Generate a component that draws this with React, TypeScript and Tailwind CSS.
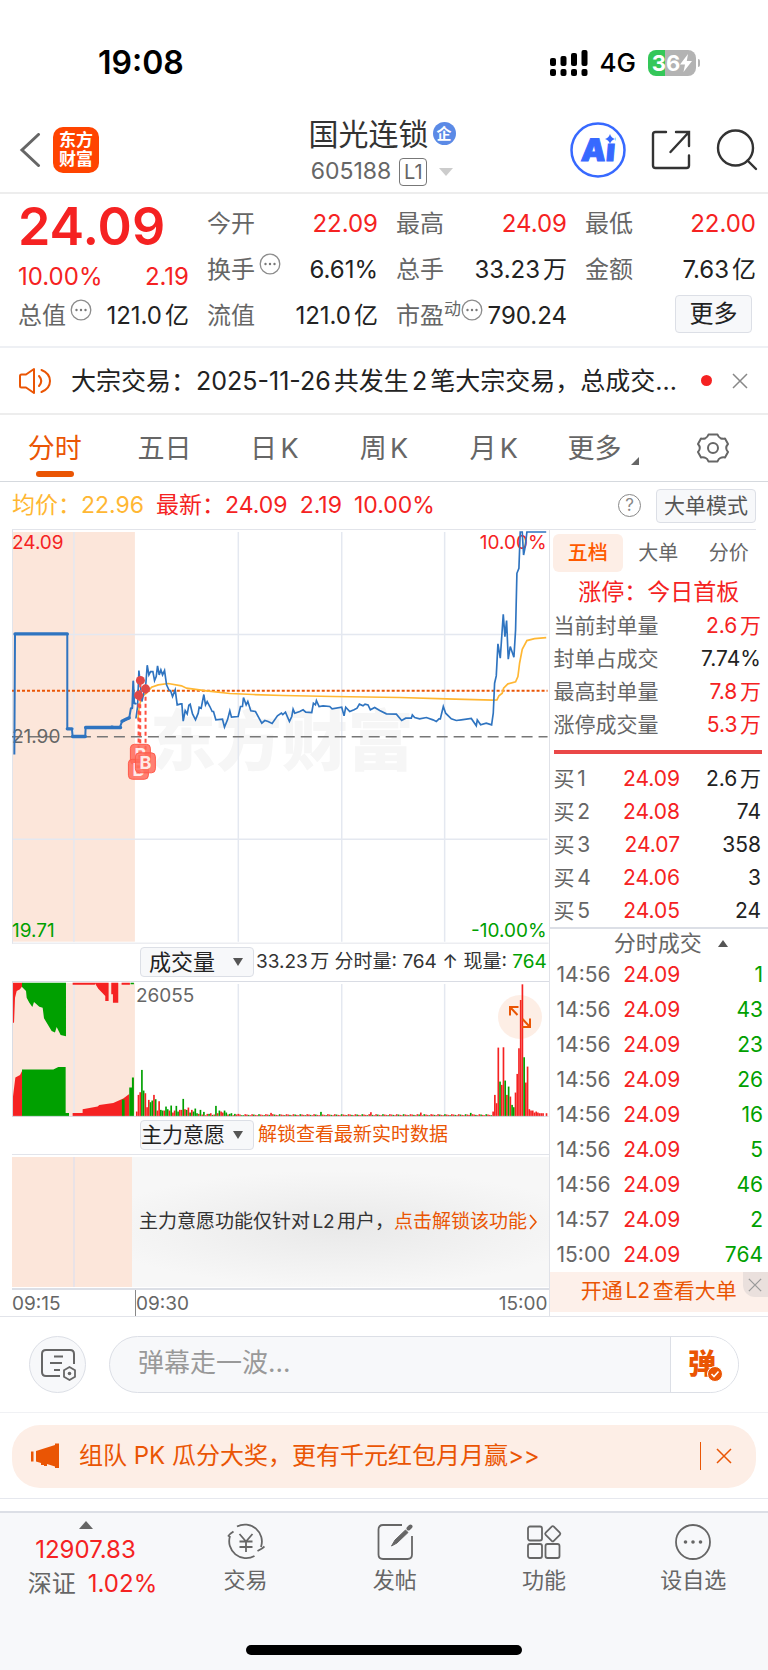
import React, { useState } from 'react';

interface Quote {
  label: string;
  value: string;
  up?: boolean;
  hint?: boolean;
  sup?: string;
}

const quoteColumns: Quote[][] = [
  [
    { label: '今开', value: '22.09', up: true },
    { label: '换手', value: '6.61%', hint: true },
    { label: '流值', value: '121.0亿' },
  ],
  [
    { label: '最高', value: '24.09', up: true },
    { label: '总手', value: '33.23万' },
    { label: '市盈', value: '790.24', hint: true, sup: '动' },
  ],
  [
    { label: '最低', value: '22.00', up: true },
    { label: '金额', value: '7.63亿' },
  ],
];

const periods = ['分时', '五日', '日K', '周K', '月K', '更多'];

const sealStats = [
  { label: '当前封单量', value: '2.6万', up: true },
  { label: '封单占成交', value: '7.74%', up: false },
  { label: '最高封单量', value: '7.8万', up: true },
  { label: '涨停成交量', value: '5.3万', up: true },
];

const bids = [
  ['买1', '24.09', '2.6万'],
  ['买2', '24.08', '74'],
  ['买3', '24.07', '358'],
  ['买4', '24.06', '3'],
  ['买5', '24.05', '24'],
];

const trades = [
  ['14:56', '24.09', '1'],
  ['14:56', '24.09', '43'],
  ['14:56', '24.09', '23'],
  ['14:56', '24.09', '26'],
  ['14:56', '24.09', '16'],
  ['14:56', '24.09', '5'],
  ['14:56', '24.09', '46'],
  ['14:57', '24.09', '2'],
  ['15:00', '24.09', '764'],
];

// Series are stored in thirds of a chart unit
const auctionLine =
  '43,704 45,342 202,342 202,626 216,628 218,650 256,650 257,623 330,623 336,620 344,622 360,622 366,606 376,600 388,594 393,565 397,565 398,540 400,485 403,550 410,552';

const priceLine =
  '408,596 413,560 417,452 422,500 426,545 436,500 438,490 442,436 447,465 452,455 459,455 464,482 469,470 473,438 478,465 483,450 488,465 494,452 500,495 508,512 512,512 518,530 526,510 532,555 543,552 546,552 550,604 556,572 562,582 567,556 571,553 578,582 587,600 595,580 598,562 604,565 612,524 617,555 622,545 630,560 637,575 641,575 648,600 668,598 674,622 683,600 690,573 695,592 715,590 722,560 728,560 731,533 739,555 744,545 753,573 767,575 786,610 795,602 805,605 817,611 833,588 845,580 849,584 857,577 869,605 876,590 880,568 885,580 900,575 910,570 918,577 936,578 941,550 947,555 950,542 958,560 970,558 990,560 997,567 1026,562 1033,588 1038,562 1050,575 1063,570 1072,565 1079,553 1090,558 1096,553 1105,555 1112,570 1125,563 1140,572 1160,582 1190,583 1206,602 1218,595 1235,595 1238,585 1245,593 1260,597 1280,593 1300,600 1310,605 1318,597 1322,597 1331,560 1338,580 1355,597 1370,602 1385,600 1415,596 1430,618 1433,600 1443,615 1460,610 1476,615 1481,580 1485,490 1490,468 1495,372 1502,415 1511,283 1516,350 1521,302 1526,418 1532,380 1543,412 1548,330 1552,160 1558,145 1562,36 1568,36 1572,105 1577,80 1582,36 1640,36';

const averageLine =
  '414,600 418,560 426,530 440,520 455,502 475,495 505,491 545,498 560,505 620,513 690,521 760,524 850,527 1000,530 1200,533 1340,537 1480,541 1492,540 1498,528 1508,520 1512,505 1525,492 1548,486 1555,470 1560,430 1568,388 1582,362 1605,356 1640,353';

// Bar heights per minute, negative is a falling minute
const openingBars = [
  15, 65, 73, -140, -78, 70, 28, 50, -43, -48, 65, -52, 18, 46, -20, -18, 18, -30, -22, 18, -33, 12, 18, -32,
  -15, 20, 20, -53, 22, -20, 27, -12, 20, -15, -24, -10, 8, -20, 6, -14, 4, 8, -8, 10, -5, 6, -32, 10, -18, 15,
  12, -18, -12, 6, -8, -10, 4, -8, 6, 8, 6, -4,
];
const middayBars = Array.from({ length: 145 }, (_, i) => {
  const spike = (i * 13) % 29 === 5 ? 7 : 0;
  return (4 + ((i * 7) % 4) + spike) * ((i * 5) % 3 === 0 ? -1 : 1);
});
const closingBars = [
  15, 65, 40, 207, -105, 95, 208, -108, 65, -90, 60, -35, -28, 72, 128, 205, 350, 397, -178, 102, 150, 22, 18, 18,
  12, 15, 12, 10, 10, 10, 0, 10,
];
const volumeBars = [...openingBars, ...middayBars, ...closingBars];

const latin = { fontFamily: 'Inter, "Noto Sans CJK SC", sans-serif' };

const HintIcon = () => (
  <svg viewBox="0 0 22 22" className="w-[22px] h-[22px] shrink-0 self-start mt-1.5" fill="none" aria-hidden="true">
    <circle cx="11" cy="11" r="9.8" stroke="#8c8c8c" strokeWidth="1.3" />
    <circle cx="6.5" cy="11" r="1.2" fill="#777" />
    <circle cx="11" cy="11" r="1.2" fill="#777" />
    <circle cx="15.5" cy="11" r="1.2" fill="#777" />
  </svg>
);

const CloseIcon = ({ className }: { className: string }) => (
  <svg viewBox="0 0 16 16" className={className} fill="none" stroke="currentColor" strokeWidth="1.5" aria-hidden="true">
    <path d="M1 1l14 14M15 1L1 15" />
  </svg>
);

const QuoteRow = ({ label, value, up, hint, sup }: Quote) => (
  <div className="flex h-[46px] items-center">
    <span className="text-[#666]">{label}</span>
    {sup && <span className="self-start text-[17px] leading-8 text-[#666]">{sup}</span>}
    {hint && (
      <span className={`flex h-full ${sup ? '' : 'ml-1'}`}>
        <HintIcon />
      </span>
    )}
    <span className={`ml-auto ${up ? 'text-[#f52222]' : 'text-[#222]'}`}>{value}</span>
  </div>
);

const StatusBar = () => (
  <div className="flex h-[108px] items-center justify-between pt-[18px] pr-[68px] pl-[98px] text-black">
    <span className="text-[32px] font-semibold">19:08</span>
    <div className="flex items-center gap-3">
      <svg viewBox="0 0 38 28" className="h-7 w-[38px]" aria-hidden="true">
        <rect x="0" y="9" width="6" height="8" rx="2" />
        <rect x="10.500" y="7" width="6" height="10" rx="2" />
        <rect x="21" y="4" width="6" height="13" rx="2" />
        <rect x="31.500" y="1" width="6" height="16" rx="2" />
        <rect x="0" y="20" width="6" height="7" rx="2" />
        <rect x="10.500" y="20" width="6" height="7" rx="2" />
        <rect x="21" y="20" width="6" height="7" rx="2" />
        <rect x="31.500" y="20" width="6" height="7" rx="2" />
      </svg>
      <span className="text-[26px] font-medium">4G</span>
      <div className="flex items-center">
        <div className="flex h-[26px] w-12 items-center justify-center rounded-lg bg-[linear-gradient(90deg,#34c759_36%,#b3b3b3_36%)] text-white">
          <span className="text-[22px] font-bold">36</span>
          <svg viewBox="0 0 12 18" className="h-[18px] w-3" fill="currentColor" aria-hidden="true">
            <path d="M8 0L0 10.500h5L3.500 18 12 7H6.800z" />
          </svg>
        </div>
        <span className="ml-0.5 h-2 w-0.5 rounded-r bg-[#b3b3b3]"></span>
      </div>
    </div>
  </div>
);

const Header = () => (
  <header className="grid h-[86px] grid-cols-[1fr_auto_1fr] items-center border-b-2 border-[#ededed] px-2.5">
    <div className="flex items-center gap-3 pl-[9px]">
      <button aria-label="返回">
        <svg viewBox="0 0 22 34" className="h-[34px] w-[22px]" fill="none" stroke="#666" strokeWidth="3" aria-hidden="true">
          <path d="M19.500 1.500L3 17l16.500 15.500" strokeLinecap="round" />
        </svg>
      </button>
      <a
        href="#home"
        className="flex h-[46px] w-[46px] flex-col items-center justify-center rounded-[10px] bg-[#ff4400] text-[17px] leading-[19px] font-bold text-white"
      >
        <span>东方</span>
        <span>财富</span>
      </a>
    </div>
    <div className="flex flex-col items-center pt-[7px] pr-1">
      <h1 className="flex items-center gap-1 text-[30px] leading-9 text-[#333]">
        国光连锁
        <span className="flex h-[23px] w-[23px] items-center justify-center rounded-full bg-[#5b8ae6] text-[15px] leading-none font-bold text-white">
          企
        </span>
      </h1>
      <div className="flex h-10 items-center text-[23px] text-[#666]">
        605188
        <span className="ml-2 flex h-7 w-7 items-center justify-center rounded border border-[#777] text-[20px]">L1</span>
        <svg viewBox="0 0 14 8" className="ml-3 h-2 w-3.5" aria-hidden="true">
          <path d="M0 0h14L7 8z" fill="#ccc" />
        </svg>
      </div>
    </div>
    <div className="flex items-center justify-end gap-[25px]">
      <button aria-label="AI 助手">
        <svg viewBox="0 0 56 56" className="h-14 w-14" aria-hidden="true">
          <circle cx="28" cy="28" r="26.500" fill="#fff" stroke="#3769ff" strokeWidth="2.500" />
          <text x="11" y="39" fontSize="31" fontWeight="900" fill="#3769ff" stroke="#3769ff" transform="skewX(-5) translate(3 0)">
            Ai
          </text>
          <path d="M33 10h12v11H33z" fill="#fff" />
          <path d="M40 12q1.200 3.800 5 5-3.800 1.200-5 5-1.200-3.800-5-5 3.800-1.200 5-5z" fill="#3769ff" />
        </svg>
      </button>
      <button aria-label="分享">
        <svg viewBox="0 0 40 40" className="h-10 w-10" fill="none" stroke="#333" strokeWidth="2.400" strokeLinecap="round" aria-hidden="true">
          <path d="M15 2H4.500Q2 2 2 4.500v31Q2 38 4.500 38h31q2.500 0 2.500-2.500V25.500M25 2h13v14M38 2L19.500 22" />
        </svg>
      </button>
      <button aria-label="搜索">
        <svg viewBox="0 0 42 42" className="h-[42px] w-[42px]" fill="none" stroke="#333" strokeWidth="2.400" strokeLinecap="round" aria-hidden="true">
          <circle cx="19.500" cy="19" r="17.500" />
          <path d="M31.500 31.500L40 40" />
        </svg>
      </button>
    </div>
  </header>
);

const QuotePanel = () => (
  <section className="grid grid-cols-4 gap-x-[18px] border-b-2 border-[#eef0f4] pt-[7px] pr-3 pb-[7px] pl-[18px] text-[24px] leading-8">
    <div className="flex flex-col text-[#f52222]">
      <strong className="h-[52px] text-[52px] leading-[52px] font-semibold">24.09</strong>
      <div className="flex h-12 items-center justify-between">
        <span>10.00%</span>
        <span>2.19</span>
      </div>
      <div className="-mt-2 flex h-[46px] items-center text-[#222]">
        <span className="text-[#666]">总值</span>
        <span className="ml-1 flex h-full">
          <HintIcon />
        </span>
        <span className="ml-auto">121.0亿</span>
      </div>
    </div>
    {quoteColumns.map((column, i) => (
      <div key={i} className="flex flex-col">
        {column.map((quote) => (
          <QuoteRow key={quote.label} {...quote} />
        ))}
        {i === 2 && (
          <button className="mt-0.5 mr-1 h-[38px] w-[77px] self-end rounded border border-[#dcdfe6] bg-[#f7f8fa] text-[24px] leading-none text-[#222]">
            更多
          </button>
        )}
      </div>
    ))}
  </section>
);

const Notice = () => (
  <div className="flex h-[67px] items-center border-b-2 border-[#ededed] pr-5 pl-[19px]">
    <svg viewBox="0 0 32 28" className="h-7 w-8 shrink-0" fill="none" stroke="#ea5504" strokeWidth="2" strokeLinejoin="round" strokeLinecap="round" aria-hidden="true">
      <path d="M15 2v24L7 20.500H2.500Q1 20.500 1 19V9q0-1.500 1.500-1.500H7zM20 9q4.500 5 0 10M22.500 3q8.500 3.500 8.500 11t-8.500 11" />
    </svg>
    <a href="#notice" className="ml-5 min-w-0 flex-1 truncate text-[25px] leading-8 text-[#222]">
      大宗交易：2025-11-26共发生2笔大宗交易，总成交...
    </a>
    <span className="h-[11px] w-[11px] rounded-full bg-[#f52222]"></span>
    <button aria-label="关闭公告" className="ml-5 text-[#888]">
      <CloseIcon className="h-4 w-4" />
    </button>
  </div>
);

interface PeriodTabsProps {
  active: string;
  onSelect: (period: string) => void;
}

const PeriodTabs: React.FC<PeriodTabsProps> = ({ active, onSelect }) => (
  <nav className="grid h-[67px] grid-cols-7 border-b border-[#d5d9de] text-[27px] text-[#666]">
    {periods.map((period) => (
      <button
        key={period}
        onClick={() => onSelect(period)}
        className={`flex flex-col items-center pt-3.5 ${period === active ? 'text-[#ea5504]' : ''}`}
      >
        <span className="flex items-end gap-2.5 leading-10">
          {period}
          {period === '更多' && (
            <svg viewBox="0 0 8 8" className="mb-1 h-2 w-2" aria-hidden="true">
              <path d="M8 0v8H0z" fill="#666" />
            </svg>
          )}
        </span>
        {period === active && <span className="mt-0.5 h-1.5 w-[38px] rounded-full bg-[#ea5504]"></span>}
      </button>
    ))}
    <button aria-label="设置" className="flex items-center justify-center">
      <svg viewBox="0 0 32 30" className="h-[30px] w-8" fill="none" stroke="#666" strokeWidth="2" strokeLinejoin="round" aria-hidden="true">
        <path d="M11.500 1.500h9q1 2.800 3 3.700 2 .8 4.500.3l3 5.500q-1.800 2-1.800 4t1.800 4l-3 5.500q-2.500-.5-4.500.4-2 .8-3 3.600h-9q-1-2.800-3-3.600-2-.9-4.500-.4L1 19q1.800-2 1.800-4T1 11l3-5.500q2.500.5 4.500-.3 2-.9 3-3.700z" />
        <circle cx="16" cy="15" r="5" />
      </svg>
    </button>
  </nav>
);

const PriceChart = () => (
  <svg viewBox="0 0 537 414" className="block h-auto w-full" role="img" aria-label="分时走势" style={latin}>
    <text x="138" y="235" fontSize="66" fontWeight="900" fill="#f6f6f6">
      东方财富
    </text>
    <rect x="0" y="2" width="123" height="410" fill="#fce6da" />
    <g stroke="#e4e8f0" fill="none">
      <path d="M62 2v410M226.500 2v410M330 2v410M433 2v410M0 104.500h536M0 309.500h536" strokeWidth="1.500" />
      <path d="M0.500 0v414M0 413.500h537" stroke="#e2e4ea" />
    </g>
    <path d="M0 207h536" stroke="#777" strokeWidth="1.500" strokeDasharray="11 6" />
    <path d="M0 161h536" stroke="#ea5504" strokeWidth="2" strokeDasharray="3 2" />
    <g fontSize="19">
      <text x="0" y="19" fill="#f52222">24.09</text>
      <text x="0" y="213" fill="#666">21.90</text>
      <text x="0" y="407" fill="#00a000">19.71</text>
      <text x="535" y="19" textAnchor="end" fill="#f52222">10.00%</text>
      <text x="535" y="407" textAnchor="end" fill="#00a000">-10.00%</text>
    </g>
    <g transform="translate(-12 -10) scale(0.33333)" fill="none">
      <polyline points={averageLine} stroke="#ffb733" strokeWidth="5" />
      <polyline points={auctionLine} stroke="#2f74c0" strokeWidth="6" strokeLinejoin="round" />
      <path d="M45 342h157M202 627h14M218 650h38M257 623h105M366 604l12-6 10-4" stroke="#2f74c0" strokeWidth="10" strokeLinecap="round" />
      <polyline points={priceLine} stroke="#2f74c0" strokeWidth="5" />
      <path d="M421 490v190M416 530v190M437 510v190" stroke="#ff5040" strokeWidth="6" strokeDasharray="12 9" />
    </g>
    <g fill="#e04848">
      <circle cx="128.500" cy="150.500" r="4.500" />
      <circle cx="133.700" cy="159" r="4.500" />
      <circle cx="126.700" cy="165.500" r="4.500" />
    </g>
    {[
      [128.5, 224.5],
      [126.5, 239.5],
      [133.5, 233],
    ].map(([x, y]) => (
      <g key={x} fillOpacity="0.85">
        <rect x={x - 10} y={y - 10} width="20" height="20" rx="4" fill="#ff6a5a" stroke="#ff5a4a" />
        <text x={x} y={y + 6.5} fontSize="18" fontWeight="700" textAnchor="middle" fill="#fff">
          B
        </text>
      </g>
    ))}
  </svg>
);

const VolumeChart = () => (
  <div className="relative">
    <svg viewBox="0 0 537 135" className="block h-auto w-full" role="img" aria-label="成交量" style={latin}>
      <rect x="0" y="1" width="123" height="133" fill="#fce6da" />
      <path d="M62 2v132M226.500 2v132M330 2v132M433 2v132" stroke="#e4e8f0" strokeWidth="1.500" />
      <g transform="translate(-12 -51) scale(0.33333)">
        <path
          fill="#f52222"
          d="M36 155h31v10l-7 10-10 5-5 20-3 75h-6zM36 557v-37l10-80 14-8 6-12v137zM218 155h67v6h-67zM284 155h42v55h-10v-15l-21-22zM334 155h21v60h-16v-25h-5zM365 155h25v6h-25zM218 557v-11h30v-11l45-8 5-5 42-6 30-13 18-14v68z"
        />
        <path
          fill="#00a000"
          d="M66 155h132v161l-16-4-12-24-5 17-10-5-23-38-4-32-10-3-16-14-5 15-9-13-8-15-2-20-12-12zM66 416h94l15-8h22v149H66zM197 546h10v11h-10zM388 490v-20h8v-30h6v117h-14zM366 506h8v51h-8zM392 155h10v5h-10z"
        />
        {volumeBars.map((bar, i) => (
          <rect
            key={i}
            x={408 + i * 5.17}
            y={557 - Math.abs(bar)}
            width="5"
            height={Math.abs(bar)}
            fill={bar < 0 ? '#00a000' : '#f52222'}
          />
        ))}
      </g>
      <text x="124" y="20" fontSize="19" fill="#666">
        26055
      </text>
      <path d="M0.500 0v135M0 134.500h537" stroke="#d9dce4" />
    </svg>
    <button
      aria-label="放大"
      className="absolute top-[13px] right-[7px] flex h-11 w-11 items-center justify-center rounded-full bg-[#ea5504]/10"
    >
      <svg viewBox="0 0 22 22" className="h-[22px] w-[22px]" fill="none" stroke="#ea5504" strokeWidth="2" aria-hidden="true">
        <path d="M9.500 1H1v8.500M1 1l7.500 8M13 21h8v-8.500M21 21l-7.500-8" />
      </svg>
    </button>
  </div>
);

interface IndicatorSelectProps {
  label: string;
  options: string[];
  className: string;
}

const IndicatorSelect: React.FC<IndicatorSelectProps> = ({ label, options, className }) => (
  <div className="relative ml-32 h-[30px] w-[114px] shrink-0 rounded border border-[#dcdfe6] bg-[#f7f8fa]">
    <select
      aria-label={label}
      className={`h-full w-full appearance-none bg-transparent leading-7 text-[#222] outline-none ${className}`}
    >
      {options.map((option) => (
        <option key={option}>{option}</option>
      ))}
    </select>
    <svg viewBox="0 0 10 8" className="pointer-events-none absolute top-2.5 right-2.5 h-2 w-2.5" aria-hidden="true">
      <path d="M0 0h10L5 8z" fill="#555" />
    </svg>
  </div>
);

const ChartColumn = () => (
  <div className="flex flex-col pl-3">
    <PriceChart />
    <div className="flex h-[38px] items-center border-b border-[#d9dce4]">
      <IndicatorSelect label="指标一" options={['成交量', '成交额']} className="pl-2 text-[22px]" />
      <p className="ml-0.5 flex-1 text-[19px] leading-6 whitespace-nowrap text-[#333]">
        33.23万 分时量: 764 ↑ 现量: <span className="text-[#00a000]">764</span>
      </p>
    </div>
    <VolumeChart />
    <div className="flex h-[38px] items-center border-b border-[#e2e4ea]">
      <IndicatorSelect label="指标二" options={['主力意愿', '主力资金']} className="text-[21px]" />
      <a href="#unlock" className="ml-1 text-[19px] leading-6 whitespace-nowrap text-[#ea5504]">
        解锁查看最新实时数据
      </a>
    </div>
    <div className="flex h-[135px] border-b-2 border-[#dcdfe6] pt-0.5 pb-px">
      <div className="flex w-[120px] bg-[#fce6da]">
        <div className="w-[63px] border-r-2 border-[#e9e2e6]"></div>
      </div>
      <p className="flex flex-1 items-center bg-[radial-gradient(ellipse_60%_45%_at_50%_55%,#e9e9e9,#f7f7f7)] pl-[7px] text-[19px] leading-6 whitespace-nowrap text-[#333]">
        主力意愿功能仅针对L2用户，
        <a href="#unlock" className="flex items-center text-[#ea5504]">
          点击解锁该功能
          <svg viewBox="0 0 8 16" className="ml-0.5 h-4 w-2" fill="none" stroke="currentColor" strokeWidth="1.600" aria-hidden="true">
            <path d="M1 1l6 7-6 7" />
          </svg>
        </a>
      </p>
    </div>
    <div className="flex h-[26px] text-[19px] leading-[28px] text-[#666]">
      <span className="w-[123px]">09:15</span>
      <span className="flex-1 border-l border-[#888]">09:30</span>
      <span className="pr-px">15:00</span>
    </div>
  </div>
);

const OrderColumn = () => {
  const [tab, setTab] = useState('五档');

  return (
    <aside className="flex flex-col border-l border-[#e0e2e8] text-[21px]">
      <div className="grid grid-cols-3 pt-1 pr-1 pl-[3px] text-[20px] text-[#666]">
        {['五档', '大单', '分价'].map((name) => (
          <button
            key={name}
            onClick={() => setTab(name)}
            className={`h-[38px] rounded-md ${name === tab ? 'bg-[#fdeee6] font-medium text-[#ff5a00]' : ''}`}
          >
            {name}
          </button>
        ))}
      </div>
      <h2 className="h-[37px] text-center text-[23px] leading-10 text-[#f52222]">涨停：今日首板</h2>
      <dl className="pr-[7px] pl-1">
        {sealStats.map((stat) => (
          <div key={stat.label} className="flex h-[33px] items-center justify-between">
            <dt className="text-[#666]">{stat.label}</dt>
            <dd className={stat.up ? 'text-[#f52222]' : 'text-[#222]'}>{stat.value}</dd>
          </div>
        ))}
      </dl>
      <div className="mr-1.5 ml-1 mt-[9px] h-1 bg-[#ea4848]"></div>
      <table className="mt-2 mr-[7px] ml-1 table-fixed">
        <tbody>
          {bids.map(([level, price, amount]) => (
            <tr key={level} className="h-[33px]">
              <td className="w-[27%] p-0 leading-8 text-[#666]">{level}</td>
              <td className="w-[34%] p-0 text-right leading-8 text-[#f52222]">{price}</td>
              <td className="p-0 text-right leading-8 text-[#222]">{amount}</td>
            </tr>
          ))}
        </tbody>
      </table>
      <button className="flex h-[30px] items-center justify-center gap-4 border-t-2 border-[#dcdfe6] pl-6 text-[22px] text-[#666]">
        分时成交
        <svg viewBox="0 0 10 7" className="h-[7px] w-2.5" aria-hidden="true">
          <path d="M5 0l5 7H0z" fill="#555" />
        </svg>
      </button>
      <table className="mr-[5px] ml-[7px] table-fixed">
        <tbody>
          {trades.map(([time, price, amount], i) => (
            <tr key={i} className="h-[35px]">
              <td className="w-[27%] p-0 leading-8 text-[#666]">{time}</td>
              <td className="w-[33%] p-0 text-right leading-8 text-[#f52222]">{price}</td>
              <td className="p-0 text-right leading-8 text-[#00a000]">{amount}</td>
            </tr>
          ))}
        </tbody>
      </table>
      <div className="relative h-10 bg-[#fdf0ea] text-center leading-[38px]">
        <a href="#level2" className="text-[#ea5504]">
          开通L2查看大单
        </a>
        <button
          aria-label="关闭"
          className="absolute top-0 right-0 flex h-[25px] w-[25px] items-center justify-center rounded-bl-xl bg-[#eae0dd] text-[#999]"
        >
          <CloseIcon className="h-3.5 w-3.5" />
        </button>
      </div>
    </aside>
  );
};

const CommentBar = () => (
  <form className="flex h-24 items-center gap-[23px] border-b border-[#f0f1f4] px-[29px]" onSubmit={(e) => e.preventDefault()}>
    <button
      type="button"
      aria-label="弹幕设置"
      className="flex h-[57px] w-[57px] shrink-0 items-center justify-center rounded-full border border-[#dcdfe6] bg-[#f7f8fa]"
    >
      <svg viewBox="0 0 36 32" className="mt-0.5 ml-0.5 h-8 w-9" fill="none" stroke="#666" strokeWidth="2" aria-hidden="true">
        <path d="M33 15V5q0-4-4-4H5Q1 1 1 5v18q0 4 4 4h14M13 7.500h9M9 14h12M13 21h6" />
        <path d="M28.500 18l5.500 3.200v6.600L28.500 31 23 27.800v-6.600z" strokeWidth="1.800" />
        <circle cx="28.500" cy="24.500" r="1.800" fill="#666" stroke="none" />
      </svg>
    </button>
    <div className="flex h-[57px] min-w-0 flex-1 overflow-hidden rounded-full border border-[#dcdfe6] bg-[#f7f8fa]">
      <input
        aria-label="弹幕"
        placeholder="弹幕走一波..."
        className="min-w-0 flex-1 bg-transparent pb-1 pl-7 text-[26px] outline-none placeholder:text-[#999]"
      />
      <button aria-label="弹幕开关" className="relative flex w-[68px] items-center border-l border-[#dcdfe6] bg-white pl-[17px]">
        <span className="text-[28px] leading-none font-black text-[#ea5504]">弹</span>
        <svg viewBox="0 0 16 16" className="absolute right-[15px] bottom-2.5 h-4 w-4" aria-hidden="true">
          <circle cx="8" cy="8" r="7.500" fill="#ea5504" stroke="#fff" />
          <path d="M4.500 8l2.500 2.500L11.500 5.500" fill="none" stroke="#fff" strokeWidth="1.600" />
        </svg>
      </button>
    </div>
  </form>
);

const PromoBanner = () => (
  <div className="border-b border-[#e6e8ee] px-3 pt-3 pb-2.5">
    <div className="flex h-[63px] items-center rounded-[28px] bg-[#fdeee6] pr-6 pl-[18px] text-[#ea5504]">
      <svg viewBox="0 0 30 26" className="h-[26px] w-[30px]" fill="currentColor" aria-hidden="true">
        <path d="M1 8.500h2.500v10H1zM6 8l19-6V.500h4V25h-4v-1.500l-8-2.500v2h-3v-1h-3v-2L6 18.500z" />
      </svg>
      <a href="#promo" className="ml-[19px] flex-1 text-[24px] leading-8">
        组队 PK 瓜分大奖，更有千元红包月月赢&gt;&gt;
      </a>
      <span className="h-7 w-px bg-[#ea5504]"></span>
      <button aria-label="关闭活动" className="ml-[15px]">
        <CloseIcon className="h-4 w-4" />
      </button>
    </div>
  </div>
);

const navItems = [
  {
    label: '交易',
    icon: (
      <>
        <path d="M10 3.500A17 17 0 0 1 34 24M35 25.500l-4.500 2.500M35 25.500l2.500-2M27.500 33A17 17 0 0 1 3 13M3 11l3.500-2.500M3 11l-2 2.500" />
        <path d="M12.500 11l6.500 7.500 6.500-7.500M19 18.500V29M12.500 18.500h13M12.500 24h13" />
      </>
    ),
  },
  {
    label: '发帖',
    icon: (
      <>
        <path d="M26 2H7Q2.500 2 2.500 6.500v25Q2.500 36 7 36h24.500q4.500 0 4.500-4.500V13" />
        <path d="M15.500 23l3.500-6L29.500 7l2.500 2.500L21 20z" fill="currentColor" strokeWidth="1" />
        <path d="M32.500 5.500l2-2" strokeWidth="4" strokeLinecap="round" />
      </>
    ),
  },
  {
    label: '功能',
    icon: (
      <>
        <rect x="3" y="3.500" width="14" height="14" rx="2" />
        <rect x="3" y="21" width="14" height="14" rx="2" />
        <rect x="20.500" y="21" width="14" height="14" rx="2" />
        <rect x="22" y="5" width="11.500" height="11.500" rx="1.500" transform="rotate(45 27.750 10.750)" />
      </>
    ),
  },
  {
    label: '设自选',
    icon: (
      <>
        <circle cx="19" cy="19" r="17" />
        <circle cx="11.500" cy="19" r="1.800" fill="currentColor" stroke="none" />
        <circle cx="19" cy="19" r="1.800" fill="currentColor" stroke="none" />
        <circle cx="26.500" cy="19" r="1.800" fill="currentColor" stroke="none" />
      </>
    ),
  },
];

const BottomNav = () => (
  <footer className="mt-3 border-t-2 border-[#dcdfe6] bg-[#f7f8fa] text-[#666]">
    <nav className="grid h-[132px] grid-cols-[171px_repeat(4,minmax(0,1fr))]">
      <a href="#index" className="flex flex-col items-center pt-2 text-[24px] leading-[34px] text-[#f52222]">
        <svg viewBox="0 0 14 8" className="mb-1 h-2 w-3.5" aria-hidden="true">
          <path d="M7 0l7 8H0z" fill="#666" />
        </svg>
        <span>12907.83</span>
        <span className="flex gap-3 pl-3.5">
          <span className="text-[#666]">深证</span>
          <span>1.02%</span>
        </span>
      </a>
      {navItems.map(({ label, icon }) => (
        <a key={label} href="#nav" className="flex flex-col items-center pt-2.5 text-[22px] leading-8">
          <svg viewBox="0 0 38 38" className="mb-[3px] h-[38px] w-[38px]" fill="none" stroke="currentColor" strokeWidth="1.800" aria-hidden="true">
            {icon}
          </svg>
          <span>{label}</span>
        </a>
      ))}
    </nav>
    <div className="flex h-[26px] justify-center">
      <span className="h-2.5 w-[36%] rounded-full bg-black"></span>
    </div>
  </footer>
);

const App: React.FC = () => {
  const [period, setPeriod] = useState('分时');

  return (
    <div className="min-h-screen bg-white leading-none [text-autospace:normal]" style={latin}>
      <StatusBar />
      <Header />
      <main>
        <QuotePanel />
        <Notice />
        <PeriodTabs active={period} onSelect={setPeriod} />
        <div className="mx-3 flex h-12 items-center border-b border-[#e2e4ea] text-[23px] text-[#f52222]">
          <span className="text-[#ffb733]">均价：22.96</span>
          <span className="ml-3">最新：24.09</span>
          <span className="ml-3">2.19</span>
          <span className="ml-3">10.00%</span>
          <button
            aria-label="帮助"
            className="ml-auto flex h-[23px] w-[23px] items-center justify-center rounded-full border border-[#888] text-[17px] text-[#888]"
          >
            ?
          </button>
          <button className="ml-[15px] h-[34px] rounded border border-[#dcdfe6] bg-[#f7f8fa] px-[7px] text-[21px] text-[#555]">
            大单模式
          </button>
        </div>
        <div className="grid grid-cols-[5fr_2fr] border-b border-[#e2e4ea]">
          <ChartColumn />
          <OrderColumn />
        </div>
        <CommentBar />
        <PromoBanner />
      </main>
      <BottomNav />
    </div>
  );
};

export default App;
